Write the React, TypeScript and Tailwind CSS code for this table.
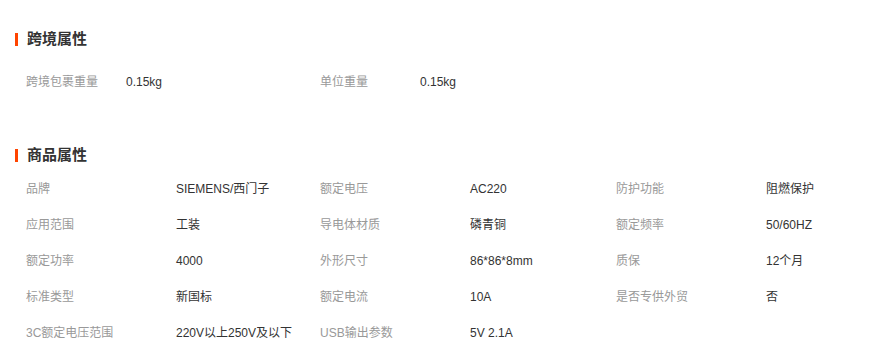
import React from 'react';

const crossBorder = [
  { label: '跨境包裹重量', value: '0.15kg' },
  { label: '单位重量', value: '0.15kg' },
];

const attrs = [
  { label: '品牌', value: 'SIEMENS/西门子' },
  { label: '额定电压', value: 'AC220' },
  { label: '防护功能', value: '阻燃保护' },
  { label: '应用范围', value: '工装' },
  { label: '导电体材质', value: '磷青铜' },
  { label: '额定频率', value: '50/60HZ' },
  { label: '额定功率', value: '4000' },
  { label: '外形尺寸', value: '86*86*8mm' },
  { label: '质保', value: '12个月' },
  { label: '标准类型', value: '新国标' },
  { label: '额定电流', value: '10A' },
  { label: '是否专供外贸', value: '否' },
  { label: '3C额定电压范围', value: '220V以上250V及以下' },
  { label: 'USB输出参数', value: '5V 2.1A' },
];

function Title({ text }: { text: string }) {
  return (
    <div className="flex items-center h-[20px]">
      <span className="w-[3px] h-[13px] bg-[#ff4400] ml-[15px] mr-[9px]"></span>
      <span className="text-[15px] font-bold text-[#333]">{text}</span>
    </div>
  );
}

export default function App() {
  return (
    <div
      className="w-[883px] h-[361px] bg-white overflow-hidden text-[12px]"
      style={{ fontFamily: "'Liberation Sans', 'Noto Sans CJK SC', sans-serif" }}
    >
      <div className="pt-[29px]">
        <Title text="跨境属性" />
        <div className="grid grid-cols-[294px_294px] pl-[26px] mt-[15px]">
          {crossBorder.map((item, i) => (
            <div key={i} className="flex items-center h-[36px]">
              <span className="w-[100px] text-[#999]">{item.label}</span>
              <span className="text-[#333]">{item.value}</span>
            </div>
          ))}
        </div>
      </div>

      <div className="pt-[45px]">
        <Title text="商品属性" />
        <div className="grid grid-cols-[294px_296px_240px] pl-[26px] mt-[6px]">
          {attrs.map((item, i) => (
            <div key={i} className="flex items-center h-[36px]">
              <span className="w-[150px] text-[#999]">{item.label}</span>
              <span className="text-[#333]">{item.value}</span>
            </div>
          ))}
        </div>
      </div>
    </div>
  );
}
